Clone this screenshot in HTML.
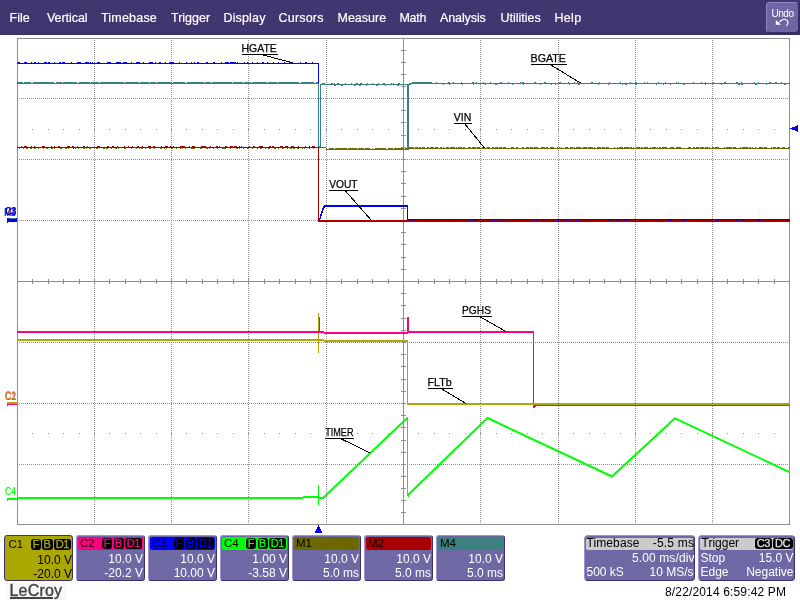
<!DOCTYPE html>
<html><head><meta charset="utf-8"><title>LeCroy</title>
<style>
html,body{margin:0;padding:0;}
body{width:800px;height:600px;position:relative;overflow:hidden;background:#fff;font-family:"Liberation Sans",sans-serif;}
#menu{position:absolute;left:0;top:0;width:800px;height:34px;background:#423671;border-bottom:1px solid #3a2e68;}
#menu span{position:absolute;top:11px;color:#fff;-webkit-text-stroke:0.2px #fff;font-size:12.5px;line-height:14px;white-space:nowrap;}
#undo{position:absolute;left:766px;top:2px;width:31px;height:29px;background:#6e66a4;border-radius:4px;border:1px solid #8f87c4;border-right-color:#382c63;border-bottom-color:#382c63;box-shadow:1px 1px 0 #382c63;}
#undo b{position:absolute;left:0;width:31px;top:4.5px;text-align:center;color:#fff;font-weight:normal;font-size:10px;letter-spacing:-0.45px;line-height:11px;}
#undo svg{position:absolute;left:-1px;top:-1px;}
svg#plot{position:absolute;left:0;top:0;}
svg#plot text{font-family:"Liberation Sans",sans-serif;}
.box{position:absolute;top:535px;width:67px;height:44px;background:#6e68a4;border-radius:3px;border:1px solid #9c94d0;border-right-color:#3c3070;border-bottom-color:#3c3070;font-size:12px;line-height:14px;white-space:nowrap;}
.box.act{border-color:#3c3070;}
.hd{position:absolute;left:1px;top:1px;right:1px;height:12.5px;border-radius:2px;}
.nm{position:absolute;color:#000;font-size:11.5px;line-height:12px;}
.v{position:absolute;right:1px;color:#fff;}
.bd{position:absolute;height:10.5px;background:#000;border-radius:3px;font-size:11px;line-height:10.5px;font-weight:normal;-webkit-text-stroke:0.35px;text-align:center;letter-spacing:-0.5px;text-indent:-0.5px;}
.wide{position:absolute;top:535px;height:44px;background:#6e68a4;border-radius:4px;border:1px solid #9c94d0;border-right-color:#3c3070;border-bottom-color:#3c3070;font-size:12px;line-height:14px;color:#fff;white-space:nowrap;}
.wide .hd{background:#cbcbcb;height:12px;top:1.5px;}
.wide span{position:absolute;}
#logo{position:absolute;left:9.5px;top:582px;font-size:16px;line-height:18px;color:#444;letter-spacing:0.2px;-webkit-text-stroke:0.4px #444;}
#logo i{position:absolute;left:0.5px;top:15.3px;width:43px;height:1.6px;background:#444;}
#ts{position:absolute;left:665px;top:584.5px;letter-spacing:0.15px;font-size:12px;line-height:14px;color:#000;white-space:nowrap;}
#all{position:absolute;left:0;top:0;width:800px;height:600px;will-change:transform;}
</style></head><body><div id="all">
<div id="menu">
<span style="left:9.5px;letter-spacing:0px">File</span><span style="left:47px;letter-spacing:-0.05px">Vertical</span><span style="left:101px;letter-spacing:0.2px">Timebase</span><span style="left:171px;letter-spacing:0px">Trigger</span><span style="left:223.5px;letter-spacing:0.15px">Display</span><span style="left:278.5px;letter-spacing:0.2px">Cursors</span><span style="left:337.5px;letter-spacing:0px">Measure</span><span style="left:399.5px;letter-spacing:-0.3px">Math</span><span style="left:440px;letter-spacing:-0.1px">Analysis</span><span style="left:500.5px;letter-spacing:0px">Utilities</span><span style="left:554.5px;letter-spacing:0.3px">Help</span>
<div id="undo"><b>Undo</b><svg width="32" height="31" viewBox="766 2 32 31"><path d="M779.2 22 L782.4 19.700 C784.500 18.600 787 19.500 787.700 21.500 C788.200 23 787.500 24.800 786.300 25.800" fill="none" stroke="#fff" stroke-width="1.100"/><path d="M775.800 20 L775.800 24.800 L781 24.800 Z" fill="#fff"/></svg></div>
</div>
<svg id="plot" width="800" height="600" viewBox="0 0 800 600" shape-rendering="crispEdges">
<line x1="94.5" y1="40" x2="94.5" y2="524" stroke="#8e8e8e" stroke-width="1" stroke-dasharray="1 1"/>
<line x1="171.5" y1="40" x2="171.5" y2="524" stroke="#8e8e8e" stroke-width="1" stroke-dasharray="1 1"/>
<line x1="248.5" y1="40" x2="248.5" y2="524" stroke="#8e8e8e" stroke-width="1" stroke-dasharray="1 1"/>
<line x1="326.5" y1="40" x2="326.5" y2="524" stroke="#8e8e8e" stroke-width="1" stroke-dasharray="1 1"/>
<line x1="480.5" y1="40" x2="480.5" y2="524" stroke="#8e8e8e" stroke-width="1" stroke-dasharray="1 1"/>
<line x1="558.5" y1="40" x2="558.5" y2="524" stroke="#8e8e8e" stroke-width="1" stroke-dasharray="1 1"/>
<line x1="635.5" y1="40" x2="635.5" y2="524" stroke="#8e8e8e" stroke-width="1" stroke-dasharray="1 1"/>
<line x1="712.5" y1="40" x2="712.5" y2="524" stroke="#8e8e8e" stroke-width="1" stroke-dasharray="1 1"/>
<line x1="19" y1="98.5" x2="789" y2="98.5" stroke="#8e8e8e" stroke-width="1" stroke-dasharray="1 1"/>
<line x1="19" y1="159.5" x2="789" y2="159.5" stroke="#8e8e8e" stroke-width="1" stroke-dasharray="1 1"/>
<line x1="19" y1="220.5" x2="789" y2="220.5" stroke="#8e8e8e" stroke-width="1" stroke-dasharray="1 1"/>
<line x1="19" y1="342.5" x2="789" y2="342.5" stroke="#8e8e8e" stroke-width="1" stroke-dasharray="1 1"/>
<line x1="19" y1="403.5" x2="789" y2="403.5" stroke="#8e8e8e" stroke-width="1" stroke-dasharray="1 1"/>
<line x1="19" y1="464.5" x2="789" y2="464.5" stroke="#8e8e8e" stroke-width="1" stroke-dasharray="1 1"/>
<line x1="403.5" y1="38.5" x2="403.5" y2="524.5" stroke="#8e8e8e" stroke-width="1"/>
<line x1="17.5" y1="281.5" x2="789.5" y2="281.5" stroke="#8e8e8e" stroke-width="1"/>
<path d="M32.5 279.0V284.0M48.5 279.0V284.0M63.5 279.0V284.0M79.5 279.0V284.0M94.5 279.0V284.0M109.5 279.0V284.0M125.5 279.0V284.0M140.5 279.0V284.0M156.5 279.0V284.0M171.5 279.0V284.0M186.5 279.0V284.0M202.5 279.0V284.0M217.5 279.0V284.0M233.5 279.0V284.0M248.5 279.0V284.0M264.5 279.0V284.0M279.5 279.0V284.0M295.5 279.0V284.0M310.5 279.0V284.0M326.5 279.0V284.0M341.5 279.0V284.0M357.5 279.0V284.0M372.5 279.0V284.0M388.5 279.0V284.0M403.5 279.0V284.0M418.5 279.0V284.0M434.5 279.0V284.0M449.5 279.0V284.0M465.5 279.0V284.0M480.5 279.0V284.0M496.5 279.0V284.0M511.5 279.0V284.0M527.5 279.0V284.0M542.5 279.0V284.0M558.5 279.0V284.0M573.5 279.0V284.0M589.5 279.0V284.0M604.5 279.0V284.0M620.5 279.0V284.0M635.5 279.0V284.0M650.5 279.0V284.0M666.5 279.0V284.0M681.5 279.0V284.0M697.5 279.0V284.0M712.5 279.0V284.0M727.5 279.0V284.0M743.5 279.0V284.0M758.5 279.0V284.0M774.5 279.0V284.0M401.0 50.5H406.0M401.0 62.5H406.0M401.0 74.5H406.0M401.0 86.5H406.0M401.0 98.5H406.0M401.0 110.5H406.0M401.0 122.5H406.0M401.0 135.5H406.0M401.0 147.5H406.0M401.0 159.5H406.0M401.0 171.5H406.0M401.0 183.5H406.0M401.0 196.5H406.0M401.0 208.5H406.0M401.0 220.5H406.0M401.0 232.5H406.0M401.0 244.5H406.0M401.0 257.5H406.0M401.0 269.5H406.0M401.0 281.5H406.0M401.0 293.5H406.0M401.0 305.5H406.0M401.0 318.5H406.0M401.0 330.5H406.0M401.0 342.5H406.0M401.0 354.5H406.0M401.0 366.5H406.0M401.0 379.5H406.0M401.0 391.5H406.0M401.0 403.5H406.0M401.0 415.5H406.0M401.0 427.5H406.0M401.0 440.5H406.0M401.0 452.5H406.0M401.0 464.5H406.0M401.0 476.5H406.0M401.0 488.5H406.0M401.0 500.5H406.0M401.0 512.5H406.0" stroke="#8e8e8e" stroke-width="1" fill="none"/>
<path d="M32 129h1v1h-1zM48 129h1v1h-1zM63 129h1v1h-1zM79 129h1v1h-1zM94 129h1v1h-1zM109 129h1v1h-1zM125 129h1v1h-1zM140 129h1v1h-1zM156 129h1v1h-1zM171 129h1v1h-1zM186 129h1v1h-1zM202 129h1v1h-1zM217 129h1v1h-1zM233 129h1v1h-1zM248 129h1v1h-1zM264 129h1v1h-1zM279 129h1v1h-1zM295 129h1v1h-1zM310 129h1v1h-1zM326 129h1v1h-1zM341 129h1v1h-1zM357 129h1v1h-1zM372 129h1v1h-1zM388 129h1v1h-1zM403 129h1v1h-1zM418 129h1v1h-1zM434 129h1v1h-1zM449 129h1v1h-1zM465 129h1v1h-1zM480 129h1v1h-1zM496 129h1v1h-1zM511 129h1v1h-1zM527 129h1v1h-1zM542 129h1v1h-1zM558 129h1v1h-1zM573 129h1v1h-1zM589 129h1v1h-1zM604 129h1v1h-1zM620 129h1v1h-1zM635 129h1v1h-1zM650 129h1v1h-1zM666 129h1v1h-1zM681 129h1v1h-1zM697 129h1v1h-1zM712 129h1v1h-1zM727 129h1v1h-1zM743 129h1v1h-1zM758 129h1v1h-1zM774 129h1v1h-1zM32 433h1v1h-1zM48 433h1v1h-1zM63 433h1v1h-1zM79 433h1v1h-1zM94 433h1v1h-1zM109 433h1v1h-1zM125 433h1v1h-1zM140 433h1v1h-1zM156 433h1v1h-1zM171 433h1v1h-1zM186 433h1v1h-1zM202 433h1v1h-1zM217 433h1v1h-1zM233 433h1v1h-1zM248 433h1v1h-1zM264 433h1v1h-1zM279 433h1v1h-1zM295 433h1v1h-1zM310 433h1v1h-1zM326 433h1v1h-1zM341 433h1v1h-1zM357 433h1v1h-1zM372 433h1v1h-1zM388 433h1v1h-1zM403 433h1v1h-1zM418 433h1v1h-1zM434 433h1v1h-1zM449 433h1v1h-1zM465 433h1v1h-1zM480 433h1v1h-1zM496 433h1v1h-1zM511 433h1v1h-1zM527 433h1v1h-1zM542 433h1v1h-1zM558 433h1v1h-1zM573 433h1v1h-1zM589 433h1v1h-1zM604 433h1v1h-1zM620 433h1v1h-1zM635 433h1v1h-1zM650 433h1v1h-1zM666 433h1v1h-1zM681 433h1v1h-1zM697 433h1v1h-1zM712 433h1v1h-1zM727 433h1v1h-1zM743 433h1v1h-1zM758 433h1v1h-1zM774 433h1v1h-1z" fill="#8e8e8e"/>
<rect x="17.5" y="38.5" width="772.0" height="486.0" fill="none" stroke="#8e8e8e" stroke-width="1"/>
<rect x="319" y="147" width="7" height="1" fill="#6e6c00"/>
<rect x="326" y="148" width="83" height="2" fill="#6e6c00"/>
<rect x="409" y="147" width="381" height="2" fill="#6e6c00"/>
<path d="M19 148h1v1h-1zM23 148h1v1h-1zM26 148h2v1h-2zM30 148h2v1h-2zM34 148h2v1h-2zM38 148h1v1h-1zM43 148h1v1h-1zM46 148h2v1h-2zM51 148h2v1h-2zM54 148h1v1h-1zM60 148h2v1h-2zM65 148h2v1h-2zM68 148h1v1h-1zM73 148h1v1h-1zM75 148h1v1h-1zM78 148h1v1h-1zM83 148h2v1h-2zM86 148h1v1h-1zM89 148h2v1h-2zM96 148h1v1h-1zM97 148h1v1h-1zM103 148h2v1h-2zM106 148h2v1h-2zM111 148h1v1h-1zM115 148h2v1h-2zM118 148h1v1h-1zM124 148h1v1h-1zM125 148h1v1h-1zM131 148h1v1h-1zM136 148h1v1h-1zM139 148h1v1h-1zM141 148h2v1h-2zM145 148h1v1h-1zM149 148h2v1h-2zM154 148h1v1h-1zM160 148h2v1h-2zM164 148h1v1h-1zM166 148h1v1h-1zM171 148h2v1h-2zM176 148h1v1h-1zM180 148h1v1h-1zM182 148h1v1h-1zM185 148h1v1h-1zM191 148h2v1h-2zM193 148h2v1h-2zM200 148h1v1h-1zM200 148h2v1h-2zM206 148h2v1h-2zM209 148h1v1h-1zM213 148h1v1h-1zM217 148h1v1h-1zM222 148h2v1h-2zM224 148h2v1h-2zM230 148h1v1h-1zM236 148h2v1h-2zM239 148h1v1h-1zM243 148h1v1h-1zM247 148h2v1h-2zM252 148h1v1h-1zM252 148h1v1h-1zM257 148h1v1h-1zM260 148h2v1h-2zM265 148h1v1h-1zM268 148h2v1h-2zM274 148h2v1h-2zM278 148h1v1h-1zM282 148h2v1h-2zM287 148h1v1h-1zM290 148h2v1h-2zM293 148h2v1h-2zM297 148h2v1h-2zM302 148h1v1h-1zM304 148h1v1h-1zM309 148h1v1h-1zM313 148h1v1h-1z" fill="#6e6c00"/>
<path d="M327 148h2v1h-2zM334 148h1v1h-1zM346 148h2v1h-2zM346 148h1v1h-1zM357 148h1v1h-1zM364 148h1v1h-1zM370 148h2v1h-2zM373 148h2v1h-2zM386 148h2v1h-2zM389 148h1v1h-1zM393 148h1v1h-1zM404 148h1v1h-1z" fill="#ffffff"/>
<path d="M333 148h1v1h-1zM346 148h1v1h-1zM365 148h1v1h-1zM368 148h1v1h-1zM389 148h1v1h-1zM405 148h1v1h-1z" fill="#6e6c00"/>
<path d="M414 147h1v1h-1zM418 147h1v1h-1zM421 147h1v1h-1zM425 147h2v1h-2zM429 147h1v1h-1zM434 147h1v1h-1zM438 147h2v1h-2zM442 147h1v1h-1zM444 147h2v1h-2zM449 147h1v1h-1zM455 147h1v1h-1zM457 147h1v1h-1zM462 147h1v1h-1zM465 147h3v1h-3zM471 147h1v1h-1zM471 147h1v1h-1zM476 147h1v1h-1zM480 147h2v1h-2zM485 147h2v1h-2zM490 147h2v1h-2zM494 147h1v1h-1zM498 147h1v1h-1zM502 147h1v1h-1zM506 147h3v1h-3zM509 147h2v1h-2zM514 147h2v1h-2zM518 147h1v1h-1zM519 147h3v1h-3zM524 147h2v1h-2zM529 147h1v1h-1zM533 147h1v1h-1zM538 147h1v1h-1zM539 147h2v1h-2zM545 147h1v1h-1zM548 147h2v1h-2zM554 147h3v1h-3zM558 147h1v1h-1zM560 147h1v1h-1zM562 147h3v1h-3zM568 147h2v1h-2zM573 147h1v1h-1zM575 147h1v1h-1zM581 147h1v1h-1zM582 147h1v1h-1zM587 147h1v1h-1zM593 147h1v1h-1zM595 147h2v1h-2zM601 147h1v1h-1zM605 147h1v1h-1zM609 147h3v1h-3zM612 147h2v1h-2zM615 147h2v1h-2zM618 147h1v1h-1zM623 147h1v1h-1zM629 147h1v1h-1zM632 147h1v1h-1zM634 147h2v1h-2zM640 147h1v1h-1zM643 147h1v1h-1zM648 147h2v1h-2zM651 147h1v1h-1zM656 147h1v1h-1zM658 147h1v1h-1zM661 147h1v1h-1zM667 147h2v1h-2zM669 147h1v1h-1zM674 147h2v1h-2zM681 147h2v1h-2zM683 147h3v1h-3zM686 147h2v1h-2zM691 147h2v1h-2zM695 147h1v1h-1zM699 147h1v1h-1zM704 147h1v1h-1zM708 147h1v1h-1zM710 147h2v1h-2zM714 147h1v1h-1zM719 147h2v1h-2zM721 147h3v1h-3zM725 147h1v1h-1zM732 147h1v1h-1zM736 147h3v1h-3zM739 147h1v1h-1zM741 147h1v1h-1zM748 147h1v1h-1zM751 147h1v1h-1zM753 147h2v1h-2zM756 147h3v1h-3zM763 147h1v1h-1zM767 147h2v1h-2zM769 147h2v1h-2zM772 147h1v1h-1zM776 147h1v1h-1zM780 147h2v1h-2zM785 147h3v1h-3z" fill="#ffffff"/>
<path d="M412 148h1v1h-1zM426 148h1v1h-1zM435 148h1v1h-1zM441 148h1v1h-1zM458 148h1v1h-1zM459 148h1v1h-1zM468 148h1v1h-1zM480 148h1v1h-1zM494 148h1v1h-1zM500 148h2v1h-2zM514 148h2v1h-2zM520 148h1v1h-1zM525 148h1v1h-1zM541 148h1v1h-1zM547 148h1v1h-1zM555 148h1v1h-1zM568 148h1v1h-1zM572 148h1v1h-1zM581 148h1v1h-1zM594 148h1v1h-1zM609 148h2v1h-2zM618 148h1v1h-1zM624 148h1v1h-1zM633 148h1v1h-1zM646 148h1v1h-1zM649 148h1v1h-1zM658 148h1v1h-1zM671 148h2v1h-2zM682 148h1v1h-1zM688 148h1v1h-1zM696 148h1v1h-1zM712 148h1v1h-1zM712 148h2v1h-2zM727 148h1v1h-1zM736 148h1v1h-1zM749 148h1v1h-1zM756 148h2v1h-2zM765 148h2v1h-2zM777 148h2v1h-2zM787 148h1v1h-1z" fill="#6e6c00"/>
<rect x="17" y="147" width="302" height="1" fill="#aa0000"/>
<path d="M21 146h1v1h-1zM24 146h3v1h-3zM31 146h1v1h-1zM34 146h1v1h-1zM42 146h1v1h-1zM42 146h3v1h-3zM51 146h1v1h-1zM54 146h1v1h-1zM58 146h2v1h-2zM67 146h3v1h-3zM72 146h2v1h-2zM73 146h1v1h-1zM77 146h1v1h-1zM83 146h2v1h-2zM87 146h1v1h-1zM97 146h2v1h-2zM99 146h1v1h-1zM107 146h1v1h-1zM108 146h1v1h-1zM112 146h2v1h-2zM117 146h1v1h-1zM124 146h1v1h-1zM128 146h1v1h-1zM132 146h1v1h-1zM137 146h2v1h-2zM142 146h1v1h-1zM148 146h3v1h-3zM153 146h2v1h-2zM161 146h1v1h-1zM165 146h3v1h-3zM170 146h2v1h-2zM173 146h1v1h-1zM180 146h2v1h-2zM182 146h3v1h-3zM189 146h1v1h-1zM192 146h3v1h-3zM201 146h3v1h-3zM203 146h3v1h-3zM210 146h1v1h-1zM216 146h2v1h-2zM219 146h1v1h-1zM225 146h2v1h-2zM230 146h3v1h-3zM234 146h3v1h-3zM239 146h1v1h-1zM241 146h1v1h-1zM249 146h1v1h-1zM253 146h2v1h-2zM259 146h3v1h-3zM261 146h2v1h-2zM269 146h2v1h-2zM272 146h2v1h-2zM280 146h3v1h-3zM285 146h2v1h-2zM286 146h2v1h-2zM291 146h3v1h-3zM298 146h1v1h-1zM305 146h1v1h-1zM309 146h1v1h-1zM312 146h3v1h-3z" fill="#aa0000"/>
<path d="M29 147h2v1h-2zM39 147h1v1h-1zM47 147h1v1h-1zM62 147h1v1h-1zM66 147h1v1h-1zM81 147h1v1h-1zM96 147h1v1h-1zM101 147h1v1h-1zM119 147h1v1h-1zM133 147h2v1h-2zM140 147h1v1h-1zM154 147h2v1h-2zM170 147h1v1h-1zM176 147h1v1h-1zM196 147h1v1h-1zM200 147h1v1h-1zM218 147h2v1h-2zM232 147h2v1h-2zM235 147h1v1h-1zM245 147h1v1h-1zM258 147h1v1h-1zM279 147h1v1h-1zM287 147h1v1h-1zM302 147h1v1h-1zM306 147h2v1h-2z" fill="#aa0000"/>
<rect x="318" y="147" width="1" height="75" fill="#aa0000"/>
<rect x="318" y="220" width="472" height="2" fill="#aa0000"/>
<rect x="17" y="82" width="302" height="2" fill="#3a8080"/>
<path d="M23 82h1v1h-1zM31 82h2v1h-2zM54 82h2v1h-2zM62 82h1v1h-1zM77 82h2v1h-2zM90 82h1v1h-1zM99 82h1v1h-1zM124 82h1v1h-1zM139 82h1v1h-1zM149 82h1v1h-1zM156 82h1v1h-1zM172 82h1v1h-1zM185 82h2v1h-2zM204 82h1v1h-1zM211 82h1v1h-1zM232 82h1v1h-1zM243 82h1v1h-1zM251 82h1v1h-1zM267 82h1v1h-1zM277 82h1v1h-1zM299 82h2v1h-2zM314 82h2v1h-2z" fill="#ffffff"/>
<rect x="318" y="83" width="1" height="64" fill="#3a8080"/>
<rect x="320" y="84" width="1" height="63" fill="#3a8080"/>
<rect x="319" y="146" width="1" height="1" fill="#3a8080"/>
<rect x="320" y="84" width="88" height="1" fill="#3a8080"/>
<rect x="322" y="83" width="3" height="1" fill="#3a8080"/>
<path d="M331 83h2v1h-2zM334 83h1v1h-1zM337 83h2v1h-2zM345 83h1v1h-1zM351 83h1v1h-1zM356 83h2v1h-2zM360 83h2v1h-2zM367 83h1v1h-1zM372 83h1v1h-1zM378 83h1v1h-1zM383 83h2v1h-2zM391 83h1v1h-1zM393 83h1v1h-1zM398 83h2v1h-2z" fill="#3a8080"/>
<path d="M334 85h2v1h-2zM341 85h2v1h-2zM354 85h2v1h-2zM359 85h2v1h-2zM366 85h1v1h-1zM376 85h2v1h-2zM385 85h1v1h-1zM397 85h2v1h-2z" fill="#3a8080"/>
<rect x="407" y="84" width="2" height="64" fill="#3a8080"/>
<rect x="409" y="83" width="381" height="1" fill="#3a8080"/>
<rect x="409" y="84" width="2" height="1" fill="#3a8080"/>
<rect x="412" y="82" width="20" height="1" fill="#3a8080"/>
<path d="M436 82h1v1h-1zM448 82h2v1h-2zM453 82h1v1h-1zM461 82h1v1h-1zM472 82h2v1h-2zM476 82h1v1h-1zM483 82h1v1h-1zM490 82h1v1h-1zM500 82h2v1h-2zM508 82h1v1h-1zM520 82h1v1h-1zM522 82h2v1h-2zM534 82h2v1h-2zM544 82h2v1h-2zM544 82h2v1h-2zM559 82h2v1h-2zM568 82h1v1h-1zM574 82h1v1h-1zM577 82h1v1h-1zM591 82h2v1h-2zM592 82h1v1h-1zM599 82h1v1h-1zM609 82h1v1h-1zM620 82h1v1h-1zM630 82h1v1h-1zM635 82h2v1h-2zM644 82h1v1h-1zM647 82h1v1h-1zM658 82h1v1h-1zM665 82h1v1h-1zM676 82h1v1h-1zM678 82h1v1h-1zM693 82h1v1h-1zM701 82h1v1h-1zM705 82h1v1h-1zM713 82h1v1h-1zM724 82h1v1h-1zM725 82h1v1h-1zM736 82h2v1h-2zM741 82h1v1h-1zM754 82h1v1h-1zM758 82h1v1h-1zM769 82h2v1h-2zM775 82h2v1h-2zM781 82h1v1h-1z" fill="#3a8080"/>
<path d="M443 84h1v1h-1zM449 84h1v1h-1zM462 84h1v1h-1zM473 84h1v1h-1zM485 84h1v1h-1zM495 84h2v1h-2zM512 84h1v1h-1zM523 84h1v1h-1zM540 84h1v1h-1zM551 84h1v1h-1zM555 84h1v1h-1zM569 84h1v1h-1zM578 84h2v1h-2zM598 84h1v1h-1zM608 84h1v1h-1zM622 84h1v1h-1zM625 84h2v1h-2zM635 84h2v1h-2zM656 84h1v1h-1zM663 84h1v1h-1zM670 84h1v1h-1zM683 84h2v1h-2zM705 84h1v1h-1zM712 84h1v1h-1zM721 84h1v1h-1zM738 84h2v1h-2zM741 84h2v1h-2zM755 84h2v1h-2zM766 84h1v1h-1zM784 84h2v1h-2z" fill="#3a8080"/>
<rect x="17" y="63" width="302" height="1" fill="#0000ff"/>
<path d="M18 62h2v1h-2zM24 62h3v1h-3zM31 62h1v1h-1zM34 62h2v1h-2zM38 62h1v1h-1zM44 62h3v1h-3zM48 62h2v1h-2zM54 62h1v1h-1zM59 62h2v1h-2zM62 62h3v1h-3zM71 62h1v1h-1zM77 62h1v1h-1zM77 62h4v1h-4zM85 62h4v1h-4zM90 62h1v1h-1zM92 62h1v1h-1zM97 62h3v1h-3zM107 62h4v1h-4zM109 62h1v1h-1zM116 62h4v1h-4zM119 62h2v1h-2zM123 62h4v1h-4zM131 62h1v1h-1zM136 62h4v1h-4zM137 62h1v1h-1zM143 62h1v1h-1zM149 62h4v1h-4zM155 62h1v1h-1zM159 62h2v1h-2zM165 62h1v1h-1zM169 62h3v1h-3zM172 62h2v1h-2zM179 62h1v1h-1zM186 62h1v1h-1zM191 62h1v1h-1zM194 62h1v1h-1zM197 62h2v1h-2zM206 62h2v1h-2zM207 62h1v1h-1zM213 62h2v1h-2zM221 62h1v1h-1zM225 62h4v1h-4zM230 62h4v1h-4zM232 62h4v1h-4zM237 62h1v1h-1zM244 62h1v1h-1zM247 62h1v1h-1zM252 62h1v1h-1zM257 62h1v1h-1zM262 62h2v1h-2zM267 62h1v1h-1zM273 62h1v1h-1zM278 62h1v1h-1zM284 62h1v1h-1zM289 62h1v1h-1zM291 62h2v1h-2zM300 62h1v1h-1zM305 62h1v1h-1zM306 62h1v1h-1zM312 62h1v1h-1z" fill="#0000ff"/>
<rect x="318" y="63" width="1" height="20" fill="#0000ff"/>
<path d="M319 218h1v-4h1v-3h1v-3h1v-2h1v-1h2v2h-1v1h-1v2h-1v3h-1v3h-1v3h-1v1h-2z" fill="#0000ff"/>
<rect x="324" y="205" width="84" height="2" fill="#0000ff"/>
<rect x="407" y="205" width="1" height="15" fill="#0000ff"/>
<rect x="407" y="219" width="383" height="1" fill="#0000ff"/>
<path d="M412 220h2v1h-2zM425 220h1v1h-1zM439 220h1v1h-1zM453 220h1v1h-1zM470 220h1v1h-1zM474 220h2v1h-2zM494 220h1v1h-1zM500 220h1v1h-1zM515 220h1v1h-1zM525 220h1v1h-1zM536 220h1v1h-1zM558 220h1v1h-1zM566 220h1v1h-1zM576 220h1v1h-1zM587 220h1v1h-1zM609 220h2v1h-2zM617 220h2v1h-2zM625 220h2v1h-2zM645 220h1v1h-1zM657 220h1v1h-1zM670 220h2v1h-2zM683 220h2v1h-2zM699 220h1v1h-1zM705 220h1v1h-1zM716 220h2v1h-2zM736 220h2v1h-2zM742 220h1v1h-1zM758 220h2v1h-2zM771 220h1v1h-1z" fill="#0000ff"/>
<rect x="17" y="339" width="307" height="2" fill="#aea800"/>
<rect x="318" y="313" width="1" height="40" fill="#aea800"/>
<rect x="324" y="340" width="84" height="2" fill="#aea800"/>
<path d="M329 341h2v1h-2zM330 341h1v1h-1zM336 341h1v1h-1zM341 341h1v1h-1zM344 341h1v1h-1zM350 341h2v1h-2zM352 341h1v1h-1zM359 341h1v1h-1zM361 341h1v1h-1zM366 341h1v1h-1zM373 341h1v1h-1zM375 341h1v1h-1zM379 341h1v1h-1zM387 341h2v1h-2zM388 341h2v1h-2zM392 341h1v1h-1zM399 341h1v1h-1zM403 341h1v1h-1z" fill="#aea800"/>
<path d="M216 338h1v1h-1zM230 338h1v1h-1zM246 338h2v1h-2zM261 338h1v1h-1zM279 338h1v1h-1zM315 338h1v1h-1z" fill="#ffffff"/>
<rect x="407" y="340" width="1" height="65" fill="#aea800"/>
<rect x="17" y="331" width="307" height="2" fill="#ff0080"/>
<rect x="319" y="317" width="1" height="16" fill="#ff0080"/>
<rect x="324" y="332" width="84" height="2" fill="#ff0080"/>
<rect x="407" y="317" width="2" height="16" fill="#ff0080"/>
<rect x="408" y="331" width="126" height="2" fill="#ff0080"/>
<path d="M420 330h1v1h-1zM430 330h1v1h-1zM433 330h2v1h-2zM442 330h1v1h-1z" fill="#ffffff"/>
<rect x="533" y="331" width="1" height="76" fill="#ff0080"/>
<rect x="533" y="404" width="257" height="2" fill="#ff0080"/>
<rect x="533" y="406" width="3" height="1" fill="#ff0080"/>
<rect x="533" y="407" width="2" height="1" fill="#ff0080"/>
<rect x="407" y="403" width="383" height="2" fill="#aea800"/>
<rect x="17" y="497" width="307" height="2" fill="#00ff00"/>
<rect x="303" y="496" width="15" height="1" fill="#00ff00"/>
<rect x="303" y="498" width="15" height="1" fill="#ffffff"/>
<rect x="318" y="485" width="1" height="20" fill="#00ff00"/>
<polyline points="323,498 407.5,417.8" fill="none" stroke="#00ff00" stroke-width="2" shape-rendering="auto"/>
<rect x="407" y="417" width="1" height="79" fill="#00ff00"/>
<rect x="408" y="493" width="1" height="4" fill="#00ff00"/>
<polyline points="408,495 487.5,418 612,476.5 675,418.3 790,472.3" fill="none" stroke="#00ff00" stroke-width="2" stroke-linejoin="round" shape-rendering="auto"/>
<text x="241.5" y="52" font-size="11" fill="#000" stroke="#000" stroke-width="0.25" textLength="35.30000000000001" lengthAdjust="spacingAndGlyphs">HGATE</text><rect x="242" y="54" width="36" height="1" fill="#000"/><line x1="261" y1="54.5" x2="291.5" y2="62.5" stroke="#000" stroke-width="1"/>
<text x="530.5" y="62" font-size="11" fill="#000" stroke="#000" stroke-width="0.25" textLength="35.5" lengthAdjust="spacingAndGlyphs">BGATE</text><rect x="531" y="64" width="36" height="1" fill="#000"/><line x1="550" y1="64.5" x2="580.5" y2="83" stroke="#000" stroke-width="1"/>
<text x="453.8" y="121" font-size="11" fill="#000" stroke="#000" stroke-width="0.25" textLength="17.399999999999977" lengthAdjust="spacingAndGlyphs">VIN</text><rect x="454" y="123" width="18" height="1" fill="#000"/><line x1="464.5" y1="123.5" x2="484.5" y2="148" stroke="#000" stroke-width="1"/>
<text x="329.2" y="188" font-size="11" fill="#000" stroke="#000" stroke-width="0.25" textLength="28.30000000000001" lengthAdjust="spacingAndGlyphs">VOUT</text><rect x="329" y="190" width="29" height="1" fill="#000"/><line x1="345" y1="190.5" x2="372" y2="221" stroke="#000" stroke-width="1"/>
<text x="462.0" y="314" font-size="11" fill="#000" stroke="#000" stroke-width="0.25" textLength="29.0" lengthAdjust="spacingAndGlyphs">PGHS</text><rect x="462" y="316" width="30" height="1" fill="#000"/><line x1="479.5" y1="316.5" x2="506" y2="331.5" stroke="#000" stroke-width="1"/>
<text x="427.5" y="386" font-size="11" fill="#000" stroke="#000" stroke-width="0.25" textLength="24.19999999999999" lengthAdjust="spacingAndGlyphs">FLTb</text><rect x="428" y="388" width="25" height="1" fill="#000"/><line x1="441" y1="388.5" x2="466" y2="403.5" stroke="#000" stroke-width="1"/>
<text x="325.2" y="436" font-size="11" fill="#000" stroke="#000" stroke-width="0.25" textLength="28.30000000000001" lengthAdjust="spacingAndGlyphs">TIMER</text><rect x="325" y="438" width="29" height="1" fill="#000"/><line x1="340.5" y1="438.5" x2="370" y2="453" stroke="#000" stroke-width="1"/>
<polygon points="790,128.5 798,125 798,132" fill="#0000ff"/>
<polygon points="318.5,525 322.5,533 314.5,533" fill="#0000ff"/>
<text x="4" y="216" font-size="10" fill="#3a8080" stroke="#3a8080" stroke-width="0.2" textLength="12" lengthAdjust="spacingAndGlyphs">M4</text>
<text x="4.5" y="216" font-size="10" fill="#aa0000" stroke="#aa0000" stroke-width="0.2" textLength="11" lengthAdjust="spacingAndGlyphs">M2</text>
<text x="5" y="215" font-size="10" fill="#0000ff" stroke="#0000ff" stroke-width="0.2" textLength="11" lengthAdjust="spacingAndGlyphs">C3</text>
<text x="5.4" y="215" font-size="10" fill="#0000ff" stroke="#0000ff" stroke-width="0.2" textLength="11" lengthAdjust="spacingAndGlyphs">C3</text>
<path d="M7 218h10v4h-9v1h-1z" fill="#0000ff"/>
<path d="M9 218h7v1h-7z" fill="#3a8080"/>
<text x="5" y="400" font-size="10" fill="#ff0080" stroke="#ff0080" stroke-width="0.2" textLength="11" lengthAdjust="spacingAndGlyphs">C2</text>
<text x="5" y="399" font-size="10" fill="#aea800" stroke="#aea800" stroke-width="0.2" textLength="11" lengthAdjust="spacingAndGlyphs">C1</text>
<path d="M7 403h10v2h-9v1h-1z" fill="#ff0080"/>
<path d="M7 402h9l1 1v1h-10z" fill="#aea800"/>
<text x="5" y="495" font-size="10" fill="#00ff00" stroke="#00ff00" stroke-width="0.2" textLength="11" lengthAdjust="spacingAndGlyphs">C4</text>
<path d="M7 498h10v2h-9v1h-1z" fill="#00ff00"/>
<rect x="790" y="400" width="10" height="100" fill="#ffffff"/>
</svg>
<div class="box act" style="left:4px;background:#aaa800"><span class="nm" style="left:3.5px;top:2px">C1</span><span class="bd" style="left:26px;top:3px;width:10px;color:#aaa800">F</span><span class="bd" style="left:37px;top:3px;width:10.5px;color:#aaa800">B</span><span class="bd" style="left:49px;top:3px;width:17px;color:#aaa800">D1</span><span class="v" style="top:17px;right:0;color:#000">10.0 V</span><span class="v" style="top:31px;right:0;color:#000">-20.0 V</span></div><div class="box" style="left:76px"><div class="hd" style="background:#ff0080"></div><span class="nm" style="left:3px;top:1px">C2</span><span class="bd" style="left:25px;top:2px;width:10px;color:#ff0080">F</span><span class="bd" style="left:36.5px;top:2px;width:10px;color:#ff0080">B</span><span class="bd" style="left:48px;top:2px;width:17px;color:#ff0080">D1</span><span class="v" style="top:16px">10.0 V</span><span class="v" style="top:30px">-20.2 V</span></div><div class="box" style="left:148px"><div class="hd" style="background:#0000ff"></div><span class="nm" style="left:3px;top:1px">C3</span><span class="bd" style="left:25px;top:2px;width:10px;color:#0000ff">F</span><span class="bd" style="left:36.5px;top:2px;width:10px;color:#0000ff">B</span><span class="bd" style="left:48px;top:2px;width:17px;color:#0000ff">D1</span><span class="v" style="top:16px">10.0 V</span><span class="v" style="top:30px">10.00 V</span></div><div class="box" style="left:220px"><div class="hd" style="background:#00ff00"></div><span class="nm" style="left:3px;top:1px">C4</span><span class="bd" style="left:25px;top:2px;width:10px;color:#00ff00">F</span><span class="bd" style="left:36.5px;top:2px;width:10px;color:#00ff00">B</span><span class="bd" style="left:48px;top:2px;width:17px;color:#00ff00">D1</span><span class="v" style="top:16px">1.00 V</span><span class="v" style="top:30px">-3.58 V</span></div><div class="box" style="left:292px"><div class="hd" style="background:#6b6800"></div><span class="nm" style="left:3px;top:1px">M1</span><span class="v" style="top:16px">10.0 V</span><span class="v" style="top:30px">5.0 ms</span></div><div class="box" style="left:364px"><div class="hd" style="background:#a80000"></div><span class="nm" style="left:3px;top:1px">M2</span><span class="v" style="top:16px">10.0 V</span><span class="v" style="top:30px">5.0 ms</span></div><div class="box" style="left:436px"><div class="hd" style="background:#3d8080"></div><span class="nm" style="left:3px;top:1px">M4</span><span class="v" style="top:16px">10.0 V</span><span class="v" style="top:30px">5.0 ms</span></div>
<div class="wide" style="left:583.5px;width:109.5px"><div class="hd"></div>
<span style="left:2px;top:0px;color:#000;letter-spacing:0.1px">Timebase</span><span style="right:-0.2px;top:0px;color:#000;letter-spacing:0.2px">-5.5 ms</span>
<span style="right:-0.6px;top:15.3px;letter-spacing:0.12px">5.00 ms/div</span>
<span style="left:2px;top:29px">500 kS</span><span style="right:0.5px;top:29px">10 MS/s</span></div>
<div class="wide" style="left:698px;width:95px"><div class="hd"></div>
<span style="left:2.5px;top:0px;color:#000">Trigger</span>
<span class="bd" style="left:56px;top:2px;width:17px;color:#ddd">C3</span><span class="bd" style="left:74px;top:2px;width:19.5px;color:#ddd">DC</span>
<span style="left:1.5px;top:15px">Stop</span><span style="right:0.5px;top:15px">15.0 V</span>
<span style="left:1.5px;top:29px">Edge</span><span style="right:0.5px;top:29px">Negative</span></div>
<div style="position:absolute;left:7px;top:583px;width:59px;height:17px;background:#f7f7f7"></div>
<div id="logo">LeCroy<i></i></div>
<div id="ts">8/22/2014 6:59:42 PM</div>
</div></body></html>
